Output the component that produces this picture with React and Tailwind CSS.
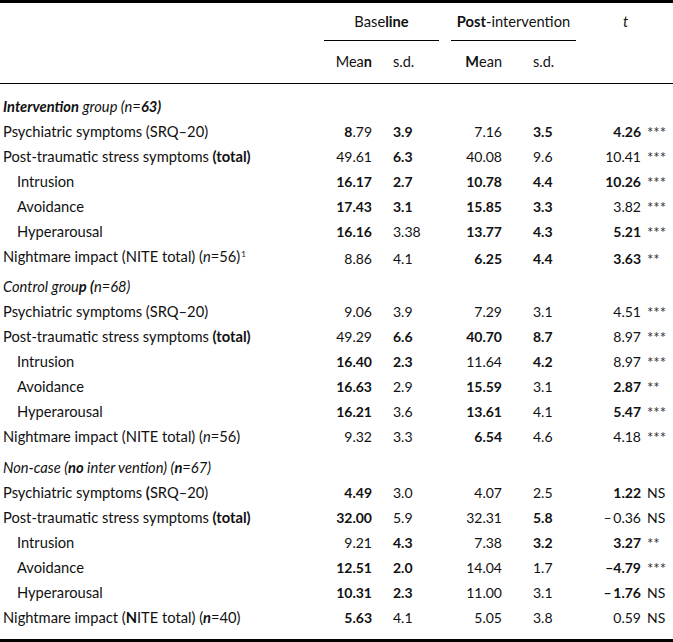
import React from "react";

const B = ({ children }) => <span className="font-bold">{children}</span>;
const I = ({ children }) => <span className="italic">{children}</span>;

const sections = [
  {
    title: (
      <span className="italic">
        <B>Intervention</B> group (<span className="italic">n</span>=<B>63)</B>
      </span>
    ),
    rows: [
      { label: "Psychiatric symptoms (SRQ–20)", v: [[<><B>8</B>.79</>, 0], ["3.9", 1], ["7.16", 0], ["3.5", 1], ["4.26", 1]], s: "***" },
      { label: <>Post-traumatic stress symptoms <B>(total)</B></>, v: [["49.61", 0], ["6.3", 1], ["40.08", 0], ["9.6", 0], ["10.41", 0]], s: "***" },
      { label: "Intrusion", ind: 1, v: [["16.17", 1], ["2.7", 1], ["10.78", 1], ["4.4", 1], ["10.26", 1]], s: "***" },
      { label: "Avoidance", ind: 1, v: [["17.43", 1], ["3.1", 1], ["15.85", 1], ["3.3", 1], ["3.82", 0]], s: "***" },
      { label: "Hyperarousal", ind: 1, v: [["16.16", 1], ["3.38", 0], ["13.77", 1], ["4.3", 1], ["5.21", 1]], s: "***" },
      { label: <>Nightmare impact (NITE total) (<I>n</I>=56)<span className="text-[8px] relative -top-[5px] ml-[1px]">1</span></>, v: [["8.86", 0], ["4.1", 0], ["6.25", 1], ["4.4", 1], ["3.63", 1]], s: "**" },
    ],
  },
  {
    title: (
      <span className="italic">
        Control grou<B>p (</B>n=68)
      </span>
    ),
    rows: [
      { label: "Psychiatric symptoms (SRQ–20)", v: [["9.06", 0], ["3.9", 0], ["7.29", 0], ["3.1", 0], ["4.51", 0]], s: "***" },
      { label: <>Post-traumatic stress symptoms <B>(total)</B></>, v: [["49.29", 0], ["6.6", 1], ["40.70", 1], ["8.7", 1], ["8.97", 0]], s: "***" },
      { label: "Intrusion", ind: 1, v: [["16.40", 1], ["2.3", 1], ["11.64", 0], ["4.2", 1], ["8.97", 0]], s: "***" },
      { label: "Avoidance", ind: 1, v: [["16.63", 1], ["2.9", 0], ["15.59", 1], ["3.1", 0], ["2.87", 1]], s: "**" },
      { label: "Hyperarousal", ind: 1, v: [["16.21", 1], ["3.6", 0], ["13.61", 1], ["4.1", 0], ["5.47", 1]], s: "***" },
      { label: <>Nightmare impact (NITE total) (<I>n</I>=56)</>, v: [["9.32", 0], ["3.3", 0], ["6.54", 1], ["4.6", 0], ["4.18", 0]], s: "***" },
    ],
  },
  {
    title: (
      <span className="italic">
        Non-case (<B>no</B> inter vention) (<B>n</B>=67)
      </span>
    ),
    rows: [
      { label: <>Psychiatric symptoms <B>(</B>SRQ–20)</>, v: [["4.49", 1], ["3.0", 0], ["4.07", 0], ["2.5", 0], ["1.22", 1]], s: "NS" },
      { label: <>Post-traumatic stress symptoms <B>(total)</B></>, v: [["32.00", 1], ["5.9", 0], ["32.31", 0], ["5.8", 1], ["–\u20090.36", 0]], s: "NS" },
      { label: "Intrusion", ind: 1, v: [["9.21", 0], ["4.3", 1], ["7.38", 0], ["3.2", 1], ["3.27", 1]], s: "**" },
      { label: "Avoidance", ind: 1, v: [["12.51", 1], ["2.0", 1], ["14.04", 0], ["1.7", 0], ["–4.79", 1]], s: "***" },
      { label: "Hyperarousal", ind: 1, v: [["10.31", 1], ["2.3", 1], ["11.00", 0], ["3.1", 0], ["–\u20091.76", 1]], s: "NS" },
      { label: <>Nightmare impact (<B>N</B>ITE total) (<span className="italic font-bold">n</span>=40)</>, v: [["5.63", 1], ["4.1", 0], ["5.05", 0], ["3.8", 0], ["0.59", 0]], s: "NS" },
    ],
  },
];

const cellCls = [
  "text-right",
  "pl-[21px]",
  "text-right",
  "pl-[31px]",
  "text-right",
];

const cols = "grid grid-cols-[330px_42px_88px_42px_94px_45px_1fr]";

function Row({ r }) {
  return (
    <div className={`${cols} h-[25px] items-center leading-[25px]`}>
      <div className={`text-[14.7px] whitespace-nowrap ${r.ind ? "pl-[17px]" : "pl-[3px]"}`}>{r.label}</div>
      {r.v.map(([t, b], i) => (
        <div key={i} className={`${cellCls[i]} whitespace-nowrap ${b ? "font-bold" : ""}`}>
          {t}
        </div>
      ))}
      <div className="pl-[6px] whitespace-nowrap">
        {r.s === "NS" ? (
          <span>NS</span>
        ) : (
          <span className="text-[15px] relative top-[1px] text-[#333]">{r.s}</span>
        )}
      </div>
    </div>
  );
}

export default function App() {
  return (
    <div
      className="w-[673px] h-[642px] bg-white text-[#111] text-[14px] flex flex-col"
      style={{ fontFamily: "Lato, 'Open Sans', sans-serif" }}
    >
      <div className="h-[3px] bg-black" />
      <div className="h-[38px] flex items-stretch text-[14.7px]">
        <div className="ml-[324px] w-[115px] border-b border-black text-center pt-[10px] leading-[17px]">
          Base<B>line</B>
        </div>
        <div className="ml-[12px] w-[125px] border-b border-black text-center pt-[10px] leading-[17px] whitespace-nowrap">
          <B>Post</B>-intervention
        </div>
        <div className="ml-[47px] pt-[10px] leading-[17px] italic">t</div>
      </div>
      <div className={`h-[43px] border-b border-black ${cols} pt-[12px] leading-[17px] text-[14.5px]`}>
        <div />
        <div className="text-right whitespace-nowrap">
          Mea<B>n</B>
        </div>
        <div className="pl-[21px]">s.d.</div>
        <div className="text-right whitespace-nowrap">
          <B>M</B>ean
        </div>
        <div className="pl-[31px]">s.d.</div>
        <div />
        <div />
      </div>
      <div className="flex flex-col pt-[10px]">
        {sections.map((s, si) => (
          <div key={si} className={si === 0 ? "" : si === 1 ? "mt-[5px]" : "mt-[6px]"}>
            <div className="h-[25px] leading-[25px] pl-[3px] text-[14.7px]">{s.title}</div>
            {s.rows.map((r, ri) => (
              <Row key={ri} r={r} />
            ))}
          </div>
        ))}
      </div>
      <div className="mt-auto h-[3px] bg-black" />
    </div>
  );
}
